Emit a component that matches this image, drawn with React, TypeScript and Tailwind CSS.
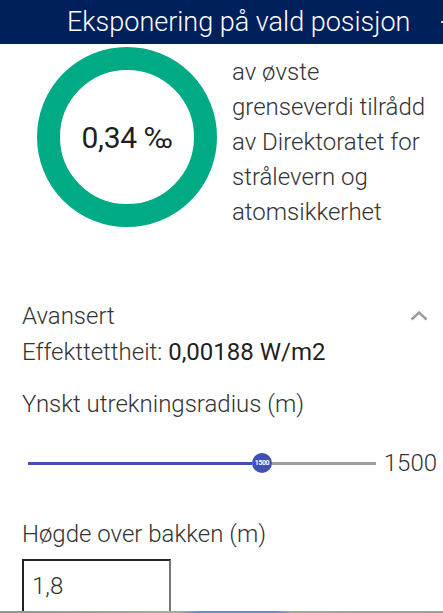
import React from "react";

const roboto = { fontFamily: "Roboto, 'Noto Sans', sans-serif" };

function Donut({ label }: { label: string }) {
  return (
    <div className="flex h-[180px] w-[180px] shrink-0 items-center justify-center rounded-full border-[23px] border-[#00aa84] bg-white">
      <span className="text-[30px] text-[#1f1f1f] tracking-[-0.3px]">{label}</span>
    </div>
  );
}

function RadiusSlider({ value }: { value: number }) {
  return (
    <div className="flex h-[28px] items-center pl-[28px] pr-[6px]">
      <div className="flex flex-1 items-center">
        <div className="h-[3px] w-[224px] bg-[#3f51b5]" />
        <div className="flex h-[20px] w-[20px] shrink-0 items-center justify-center rounded-full bg-[#3f51b5]">
          <span className="text-[7px] font-bold leading-none text-white tracking-[-0.4px]">{value}</span>
        </div>
        <div className="h-[3px] flex-1 bg-[#9e9e9e]" />
      </div>
      <span className="ml-[8px] text-[24px] font-light leading-[28px] text-[#333]">{value}</span>
    </div>
  );
}

export default function App() {
  return (
    <div style={roboto} className="relative flex h-[613px] w-[443px] flex-col overflow-hidden bg-white">
      <header className="flex h-[44px] shrink-0 items-center bg-[#00205b] pl-[67px] text-white">
        <h1 className="flex-1 text-[27px] font-light leading-[32px]">Eksponering på vald posisjon</h1>
        <span className="mr-[-6px] h-[2px] w-[8px] bg-[#cfd6e4]" />
      </header>

      <div className="flex-1 overflow-hidden">
        <section className="flex gap-[15px] pl-[37px] pt-[3px]">
          <Donut label="0,34 ‰" />
          <p className="mt-[8px] w-[205px] text-[24px] font-light leading-[35px] text-[#333]">
            av øvste grenseverdi tilrådd av Direktoratet for strålevern og atomsikkerhet
          </p>
        </section>

        <section className="mt-[72px] px-[22px]">
          <div className="flex items-center justify-between">
            <h2 className="text-[24px] font-light leading-[28px] text-[#333]">Avansert</h2>
            <svg width="18" height="10" viewBox="0 0 18 10" className="mr-[-7px]">
              <path d="M1.5 8.5 L9 1.5 L16.5 8.5" fill="none" stroke="#9a9a9a" strokeWidth="2.4" />
            </svg>
          </div>
          <p className="mt-[8px] text-[24px] font-light leading-[28px] text-[#333]">
            Effekttettheit: <span className="font-normal text-[#1f1f1f]">0,00188 W/m2</span>
          </p>
          <p className="mt-[24px] text-[24px] font-light leading-[28px] text-[#333]">Ynskt utrekningsradius (m)</p>
        </section>

        <div className="mt-[31px]">
          <RadiusSlider value={1500} />
        </div>

        <section className="mt-[43px] px-[22px]">
          <label className="block text-[24px] font-light leading-[28px] text-[#333]">Høgde over bakken (m)</label>
          <div className="mt-[11px] h-[58px] w-[149px] border-[2px] border-b-[#767676] border-l-[#222] border-r-[#767676] border-t-[#222] pl-[8px] pt-[11px]">
            <span className="text-[24px] font-light leading-[28px] text-[#333]">1,8</span>
          </div>
        </section>
      </div>

      <div className="h-[2px] shrink-0 bg-[linear-gradient(90deg,#8e9a8c_0%,#a5ab9f_40%,#6f8fc0_45%,#6f8fc0_62%,#a3a89e_66%,#9aa197_100%)]" />
    </div>
  );
}
